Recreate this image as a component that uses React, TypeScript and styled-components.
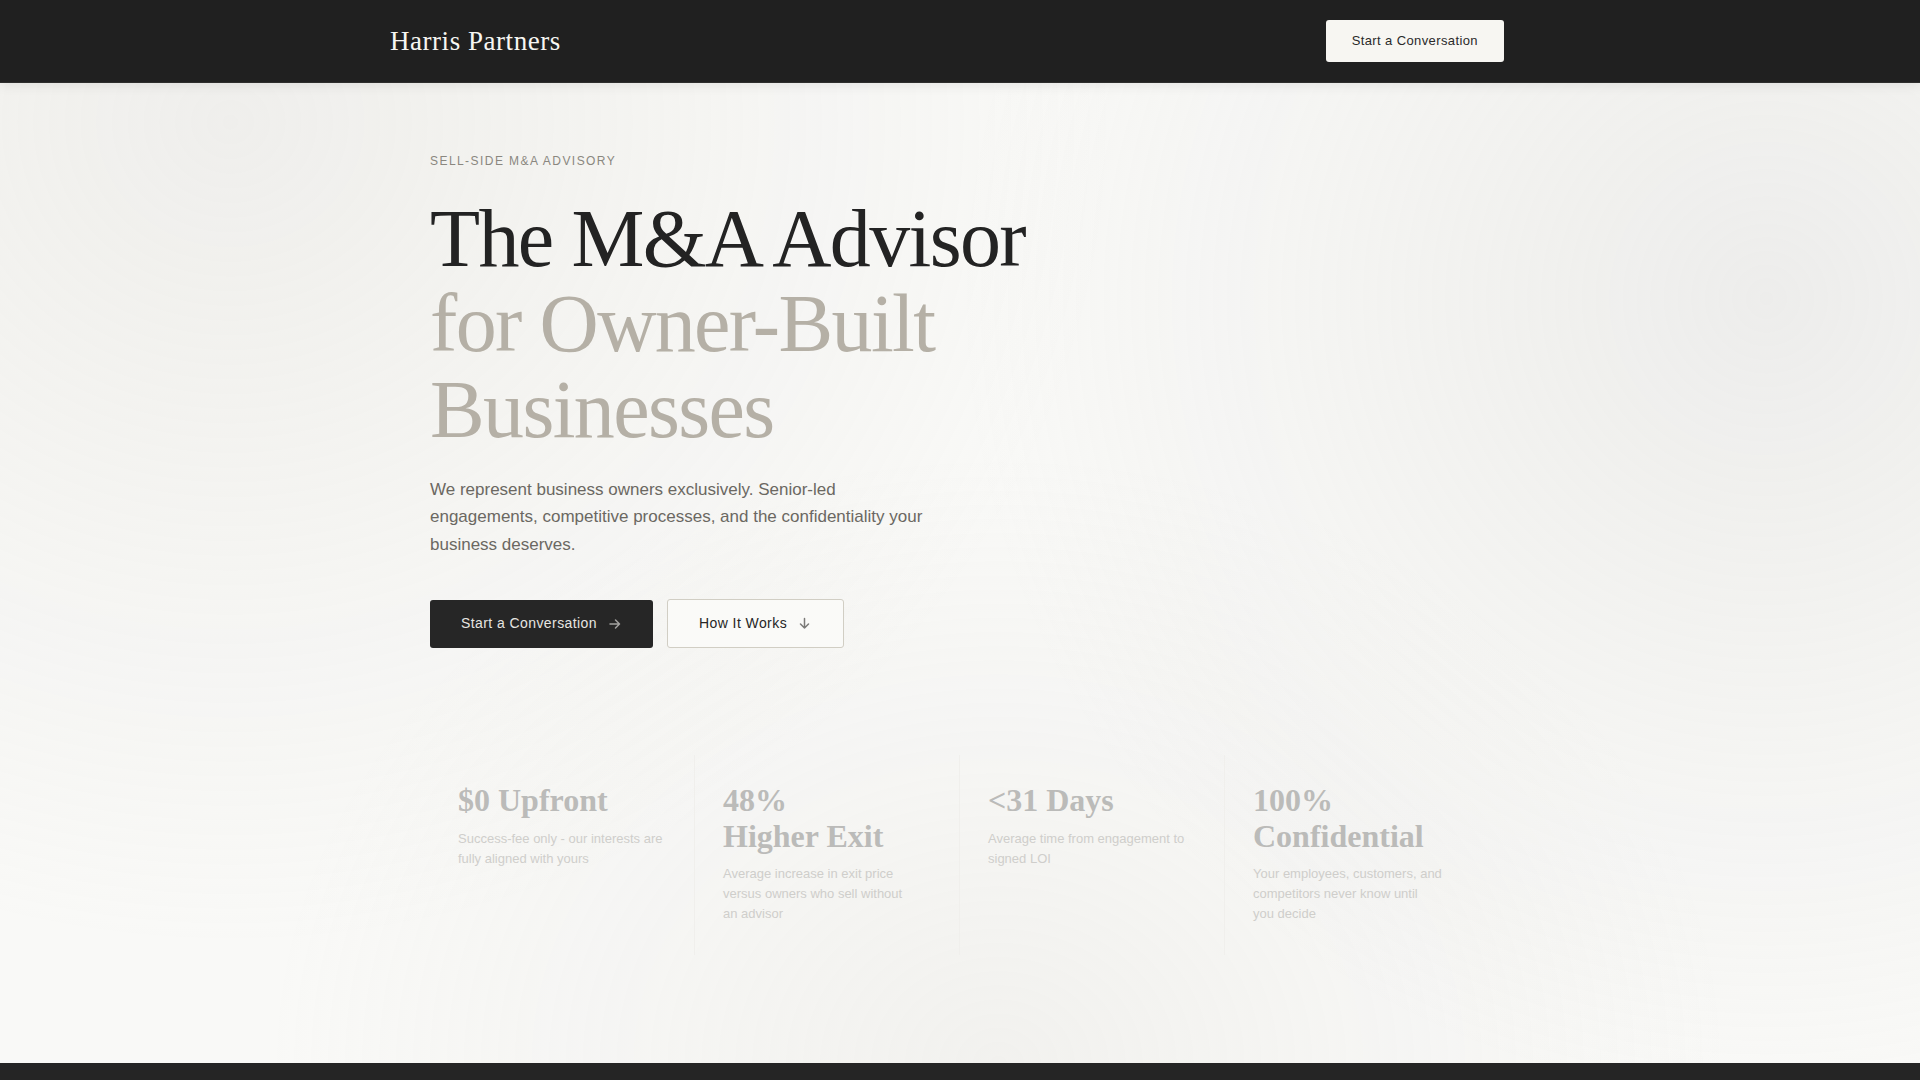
import React from "react";
import styled, { createGlobalStyle } from "styled-components";

const sans = `"Liberation Sans", Arial, Helvetica, sans-serif`;
const serif = `"Liberation Serif", "Times New Roman", serif`;

const GlobalStyle = createGlobalStyle`
  *, *::before, *::after { box-sizing: border-box; }
  body {
    margin: 0;
    background: #252525;
    color: #222222;
    font-family: ${sans};
  }
  h1, h2, p { margin: 0; }
`;

const Page = styled.div`
  display: flex;
  flex-direction: column;
  min-height: 100vh;
`;

const Nav = styled.header`
  position: sticky;
  top: 0;
  z-index: 2;
  background: #202020;
  border-bottom: 1px solid #2e2e2d;
  box-shadow: 0 2px 12px rgba(0, 0, 0, 0.08);
`;

const NavInner = styled.div`
  display: flex;
  align-items: center;
  justify-content: space-between;
  max-width: 1140px;
  margin: 0 auto;
  padding: 20px 26px 20px 0;
`;

const Logo = styled.a`
  color: #f7f6f2;
  font-family: ${serif};
  font-size: 27px;
  line-height: 32px;
  letter-spacing: 0.02em;
  text-decoration: none;
`;

const NavButton = styled.button`
  height: 42px;
  padding: 0 26px 2px;
  border: 0;
  border-radius: 3px;
  background: #f7f6f2;
  color: #2a2a2a;
  font-family: ${sans};
  font-size: 13px;
  letter-spacing: 0.03em;
  cursor: pointer;
`;

const Hero = styled.section`
  background:
    radial-gradient(ellipse 42% 82% at 92% 22%, rgba(200, 199, 197, 0.23), rgba(200, 199, 197, 0) 100%),
    radial-gradient(ellipse 46% 84% at 12% 4%, rgba(206, 203, 196, 0.22), rgba(206, 203, 196, 0) 100%),
    radial-gradient(ellipse 38% 62% at 52% 100%, rgba(206, 203, 198, 0.17), rgba(206, 203, 198, 0) 100%),
    #f9f9f7;
`;

const HeroInner = styled.div`
  max-width: 1140px;
  margin: 0 auto;
  padding: 70px 40px 108px;
`;

const Eyebrow = styled.p`
  color: #8a877f;
  font-size: 12px;
  line-height: 16px;
  letter-spacing: 0.12em;
  text-transform: uppercase;
`;

const Title = styled.h1`
  max-width: 720px;
  margin-top: 27px;
  font-family: ${serif};
  font-size: 82px;
  font-weight: 400;
  line-height: 1.04;
  letter-spacing: -0.02em;
  color: #232323;
`;

const TitleMuted = styled.span`
  display: block;
  color: #b5b0a6;
`;

const Lead = styled.p`
  max-width: 500px;
  margin-top: 24px;
  color: #6b6862;
  font-size: 17px;
  line-height: 1.62;
`;

const Actions = styled.div`
  display: flex;
  align-items: flex-end;
  gap: 14px;
  margin-top: 41px;
`;

const Action = styled.button<{ $outlined?: boolean }>`
  display: inline-flex;
  align-items: center;
  gap: 12px;
  height: ${(p) => (p.$outlined ? 49 : 48)}px;
  padding: 0 31px 2px;
  border: ${(p) => (p.$outlined ? "1px solid #d1cec4" : "0")};
  border-radius: 3px;
  background: ${(p) => (p.$outlined ? "#fafaf8" : "#262626")};
  color: ${(p) => (p.$outlined ? "#262626" : "#e6e5e1")};
  font-family: ${sans};
  font-size: 14px;
  letter-spacing: 0.03em;
  cursor: pointer;
`;

const ActionIcon = styled.svg<{ $dim?: boolean }>`
  display: block;
  fill: none;
  stroke: ${(p) => (p.$dim ? "#a3a2a0" : "#7b7a78")};
  stroke-width: 1.5;
  stroke-linecap: round;
  stroke-linejoin: round;
`;

const Stats = styled.div`
  display: grid;
  grid-template-columns: repeat(4, 1fr);
  margin-top: 107px;
`;

const Stat = styled.div`
  min-height: 200px;
  padding: 28px;
  border-right: 1px solid #f0efec;
  &:last-child { border-right: 0; }
`;

const StatValue = styled.h2`
  color: #bbbbb9;
  font-family: ${serif};
  font-size: 32px;
  font-weight: 700;
  line-height: 1.1;
`;

const StatNote = styled.p`
  margin-top: 10px;
  color: #cfcecb;
  font-size: 13px;
  line-height: 20px;
`;

const NextSection = styled.footer`
  flex: 1;
  background: #252525;
`;

const stats = [
  { value: "$0 Upfront", note: "Success-fee only - our interests are fully aligned with yours" },
  { value: "48%\nHigher Exit", note: "Average increase in exit price versus owners who sell without an\u00a0advisor" },
  { value: "<31 Days", note: "Average time from engagement to signed LOI" },
  { value: "100%\nConfidential", note: "Your employees, customers, and competitors never know until you\u00a0decide" },
];

export default function App() {
  return (
    <Page>
      <GlobalStyle />
      <Nav>
        <NavInner>
          <Logo href="#top">Harris Partners</Logo>
          <NavButton type="button">Start a Conversation</NavButton>
        </NavInner>
      </Nav>
      <Hero>
        <HeroInner>
          <Eyebrow>Sell-Side M&amp;A Advisory</Eyebrow>
          <Title>
            The M&amp;A Advisor
            <TitleMuted>for Owner-Built Businesses</TitleMuted>
          </Title>
          <Lead>
            We represent business owners exclusively. Senior-led engagements, competitive
            processes, and the confidentiality your business deserves.
          </Lead>
          <Actions>
            <Action type="button">
              Start a Conversation
              <ActionIcon $dim width="13" height="13" viewBox="0 0 13 13" aria-hidden="true">
                <path d="M1 7h9.500M6.500 3l4 4-4 4" />
              </ActionIcon>
            </Action>
            <Action type="button" $outlined>
              How It Works
              <ActionIcon width="13" height="13" viewBox="0 0 13 13" aria-hidden="true">
                <path d="M5.500 2.500V12M1.500 8l4 4 4-4" />
              </ActionIcon>
            </Action>
          </Actions>
          <Stats>
            {stats.map((stat) => (
              <Stat key={stat.value}>
                <StatValue>
                  {stat.value.split("\n").map((line, i) => (
                    <React.Fragment key={line}>
                      {i > 0 && <br />}
                      {line}
                    </React.Fragment>
                  ))}
                </StatValue>
                <StatNote>{stat.note}</StatNote>
              </Stat>
            ))}
          </Stats>
        </HeroInner>
      </Hero>
      <NextSection />
    </Page>
  );
}
